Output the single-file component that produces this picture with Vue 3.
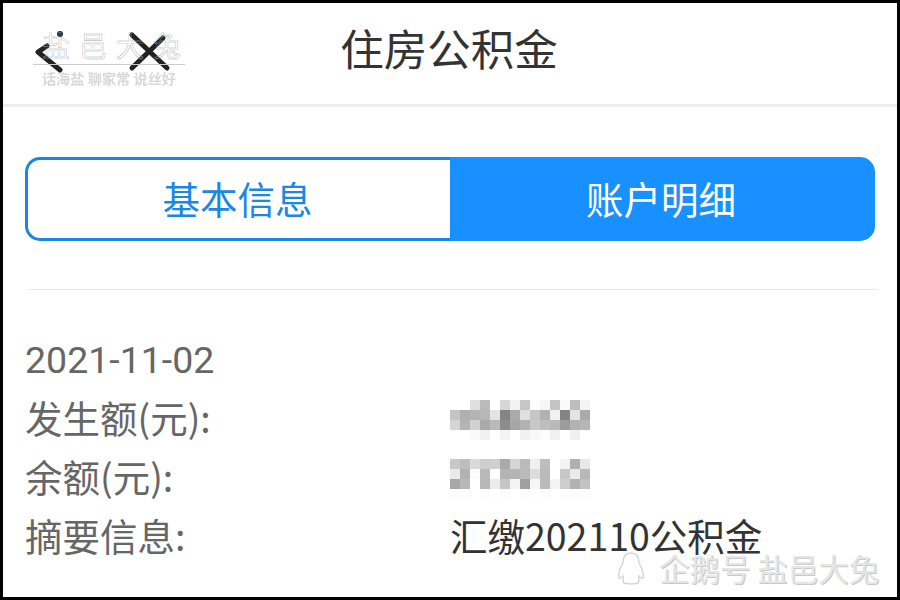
<script setup>
const tabs = [
  { label: '基本信息', active: false },
  { label: '账户明细', active: true },
]

// mosaic over the two amounts, one grey value per 10px block
const firstAmount = [
  [255, 255, 222, 186, 255, 214, 242, 198, 252, 246, 196, 250, 190, 244],
  [196, 176, 180, 184, 228, 132, 170, 224, 198, 178, 240, 132, 228, 170],
  [214, 180, 210, 170, 186, 140, 166, 178, 200, 190, 186, 156, 178, 182],
  [255, 255, 250, 240, 255, 244, 255, 240, 248, 252, 240, 255, 240, 255],
]
const secondAmount = [
  [200, 190, 218, 206, 208, 170, 214, 186, 240, 190, 255, 244, 176, 232],
  [234, 178, 252, 186, 255, 180, 180, 186, 220, 186, 255, 200, 234, 184],
  [168, 184, 255, 184, 236, 198, 244, 160, 246, 186, 244, 206, 178, 194],
  [252, 252, 255, 252, 255, 252, 255, 252, 255, 252, 255, 252, 252, 252],
]

const rows = [
  { label: '发生额(元):', blur: firstAmount },
  { label: '余额(元):', blur: secondAmount },
  { label: '摘要信息:', value: '汇缴202110公积金' },
]
</script>

<template>
  <div class="frame">
    <header class="topbar">
      <div class="nav-icons">
        <svg class="icon-back" width="34" height="50" viewBox="0 0 34 50">
          <path d="M18 17 L9 23 L31 41" fill="none" stroke="#222" stroke-width="5" stroke-linecap="round" stroke-linejoin="round" />
          <circle cx="31" cy="5" r="3" fill="#222" />
        </svg>
        <svg class="icon-close" width="44" height="42" viewBox="0 0 44 42">
          <path d="M4 4 L39 37 M4 37 L35 7" fill="none" stroke="#222" stroke-width="5" stroke-linecap="round" />
        </svg>
      </div>
      <h1>住房公积金</h1>
    </header>

    <main class="content">
      <div class="tabs">
        <div v-for="tab in tabs" :key="tab.label" :class="['tab', { active: tab.active }]">{{ tab.label }}</div>
      </div>

      <div class="rule"></div>

      <div class="date">2021-11-02</div>
      <div v-for="row in rows" :key="row.label" class="row">
        <span class="label">{{ row.label }}</span>
        <span v-if="row.value" class="value">{{ row.value }}</span>
        <div v-else class="mosaic">
          <div v-for="(line, i) in row.blur" :key="i" class="mosaic-line">
            <i v-for="(g, j) in line" :key="j" :style="{ background: `rgb(${g},${g},${g})` }"></i>
          </div>
        </div>
      </div>
    </main>

    <div class="mark-logo">
      <div class="mark-name">盐邑大兔</div>
      <div class="mark-slogan">话海盐 聊家常 说丝好</div>
    </div>

    <div class="mark-corner">
      <svg width="32" height="34" viewBox="0 0 32 34">
        <path d="M16 2 C10 2 8 7 8 12 C5 17 3 22 4 27 C6 28 7 26 8 25 C9 28 7 30 9 32 C13 33 19 33 23 32 C25 30 23 28 24 25 C25 26 26 28 28 27 C29 22 27 17 24 12 C24 7 22 2 16 2 Z" fill="#fff" stroke="#d4d4d4" stroke-width="1.4" />
      </svg>
      <span>企鹅号 盐邑大兔</span>
    </div>
  </div>
</template>

<style scoped>
.frame {
  position: relative;
  box-sizing: border-box;
  width: 900px;
  height: 600px;
  overflow: hidden;
  border: 3px solid #000;
  background: #fff;
  font-family: "Noto Sans CJK SC", "Noto Sans", sans-serif;
}

.topbar {
  display: flex;
  position: relative;
  align-items: center;
  justify-content: center;
  height: 101px;
  border-bottom: 3px solid #eee;
}

.topbar h1 {
  margin: 0 0 12px -2px;
  font-size: 43.5px;
  font-weight: 400;
  color: #333;
}

.nav-icons {
  position: absolute;
  left: 26px;
  top: 26px;
  display: flex;
  gap: 65px;
}

.icon-close {
  margin-top: 2px;
}

.content {
  padding: 50px 22px 0;
}

.tabs {
  display: flex;
  height: 84px;
}

.tab {
  flex: none;
  width: 50%;
  display: flex;
  box-sizing: border-box;
  align-items: center;
  justify-content: center;
  padding: 0 3px 4px 0;
  border: 3px solid #1a88e2;
  border-right: 0;
  border-radius: 15px 0 0 15px;
  font-size: 37.5px;
  color: #1a88e2;
}

.tab.active {
  border: 0;
  border-radius: 0 15px 15px 0;
  background: #1890ff;
  color: #fff;
}

.rule {
  height: 1px;
  margin: 48px -3px 0 3px;
  background: #eaeaea;
}

.date,
.row {
  height: 59px;
  line-height: 59px;
  font-size: 37.5px;
  color: #666;
}

.date {
  margin-top: 41px;
  font-family: Roboto, "Noto Sans CJK SC", sans-serif;
}

.row {
  display: flex;
  align-items: center;
}

.label {
  width: 425px;
  flex: none;
  padding-bottom: 7px;
}

.value {
  padding-bottom: 7px;
  color: #333;
}

.mosaic {
  display: flex;
  flex-direction: column;
  filter: blur(0.5px);
}

.mosaic-line {
  display: flex;
}

.mosaic-line i {
  width: 10px;
  height: 10px;
}

.mark-logo {
  position: absolute;
  left: 30px;
  top: 24px;
  width: 152px;
  text-align: center;
  pointer-events: none;
}

.mark-name {
  padding: 0 0 1px 9px;
  border-bottom: 1px solid #ccc;
  font-size: 28px;
  line-height: 36px;
  letter-spacing: 9px;
  white-space: nowrap;
  color: transparent;
  -webkit-text-stroke: 0.4px #aaa;
}

.mark-slogan {
  margin-top: 3px;
  font-size: 14.2px;
  line-height: 20px;
  font-weight: 700;
  color: #d8d8d8;
  white-space: nowrap;
  filter: blur(0.4px);
}

.mark-corner {
  position: absolute;
  left: 612px;
  top: 548px;
  display: flex;
  align-items: center;
  gap: 12px;
  font-size: 30.5px;
  line-height: 34px;
  color: #e6e6e6;
  text-shadow: 1px 1px 0 #c8c8c8;
  white-space: nowrap;
}
</style>

<style>
html,
body {
  margin: 0;
  background: #fff;
}
</style>
